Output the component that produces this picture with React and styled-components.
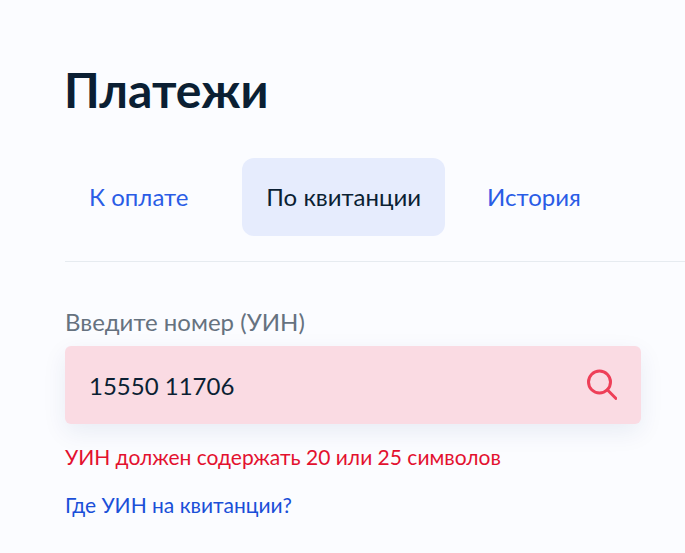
import styled, { createGlobalStyle } from "styled-components";

const GlobalStyle = createGlobalStyle`
  html, body {
    margin: 0;
    padding: 0;
    background: #fbfcff;
  }
  body {
    font-family: Lato, "Noto Sans", sans-serif;
  }
`;

const Page = styled.div`
  width: 685px;
  height: 553px;
  overflow: hidden;
  box-sizing: border-box;
  padding: 60px 44px 0 65px;
`;

const Title = styled.h1`
  margin: 0 0 0 -1px;
  font-size: 48px;
  line-height: 59px;
  font-weight: 700;
  color: #0b1f33;
`;

const Tabs = styled.div`
  display: flex;
  margin-top: 39px;
  padding-bottom: 25px;
  margin-right: -44px;
  border-bottom: 1px solid #e6ebf0;
`;

const Tab = styled.div`
  box-sizing: border-box;
  padding: 0 24px 2px;
  height: 78px;
  display: flex;
  align-items: center;
  font-size: 24px;
  border-radius: 12px;
  color: ${(p) => (p.$active ? "#0b1f33" : "#2a5ce6")};
  background: ${(p) => (p.$active ? "#e6ecfd" : "transparent")};
  margin-right: ${(p) => p.$gap || 0}px;
`;

const Label = styled.div`
  margin-top: 45px;
  font-size: 24px;
  line-height: 30px;
  color: #66727f;
`;

const Field = styled.div`
  margin-top: 9px;
  height: 78px;
  background: #fadbe3;
  border-radius: 6px;
  padding: 0 24px;
  display: flex;
  align-items: center;
  justify-content: space-between;
  box-shadow: 0 8px 24px rgba(0, 50, 120, 0.08);
`;

const Value = styled.div`
  font-size: 24px;
  color: #0b1f33;
`;

const ErrorText = styled.div`
  margin-top: 19px;
  font-size: 21px;
  line-height: 28px;
  color: #e3112f;
`;

const Help = styled.div`
  margin-top: 20px;
  font-size: 21px;
  line-height: 28px;
  color: #1a4fd8;
`;

const SearchIcon = () => (
  <svg width="32" height="32" viewBox="0 0 32 32" fill="none" stroke="#ee3f58" strokeWidth="3" strokeLinecap="round">
    <circle cx="14.5" cy="13" r="11" />
    <path d="M22.3 20.8L31 29.5" />
  </svg>
);

export default function App() {
  return (
    <>
      <GlobalStyle />
      <Page>
        <Title>Платежи</Title>
        <Tabs>
          <Tab $gap={30}>К оплате</Tab>
          <Tab $active $gap={18}>По квитанции</Tab>
          <Tab>История</Tab>
        </Tabs>
        <Label>Введите номер (УИН)</Label>
        <Field>
          <Value>15550 11706</Value>
          <SearchIcon />
        </Field>
        <ErrorText>УИН должен содержать 20 или 25 символов</ErrorText>
        <Help>Где УИН на квитанции?</Help>
      </Page>
    </>
  );
}
